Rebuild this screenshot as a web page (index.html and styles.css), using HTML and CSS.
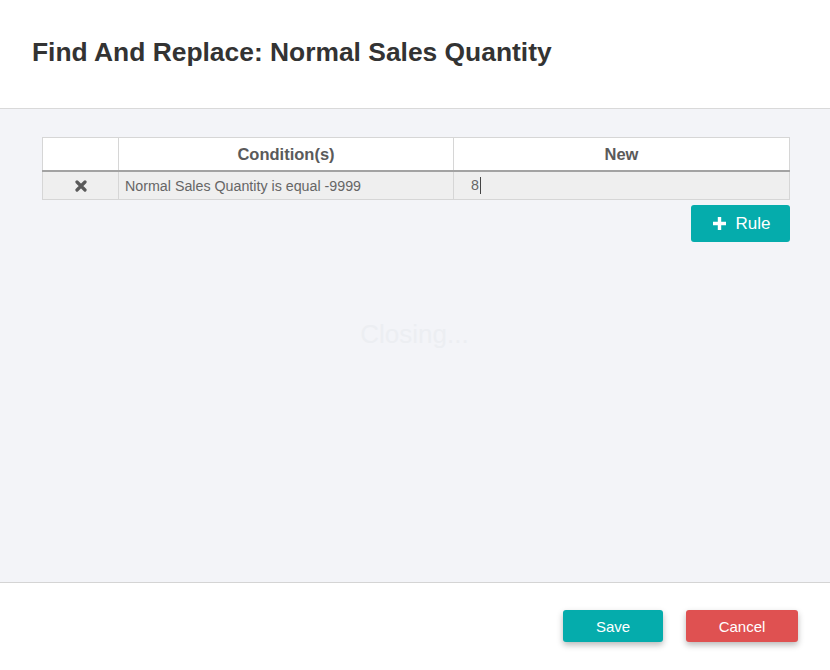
FILE: index.html
```html
<!DOCTYPE html>
<html>
<head>
<meta charset="utf-8">
<link rel="stylesheet" href="styles.css">
</head>
<body>
<div class="modal">
  <header class="modal-header">
    <h1 class="title">Find And Replace: Normal Sales Quantity</h1>
  </header>
  <main class="modal-body">
    <table class="rules">
      <thead>
        <tr>
          <th class="col-action"></th>
          <th class="col-cond">Condition(s)</th>
          <th class="col-new">New</th>
        </tr>
      </thead>
      <tbody>
        <tr>
          <td class="cell-action">
            <svg class="x-icon" width="12" height="12" viewBox="0 0 12 12"><path d="M2 2 L10 10 M10 2 L2 10" stroke="#5a5a5a" stroke-width="3.2" stroke-linecap="round"/></svg>
          </td>
          <td class="cell-cond">Normal Sales Quantity is equal -9999</td>
          <td class="cell-new">8<span class="caret"></span></td>
        </tr>
      </tbody>
    </table>
    <div class="actions">
      <button class="btn btn-rule">
        <svg class="plus" width="13" height="13" viewBox="0 0 13 13"><path d="M4.8 0 H8.2 V4.8 H13 V8.2 H8.2 V13 H4.8 V8.2 H0 V4.8 H4.8 Z" fill="#fff"/></svg>
        <span>Rule</span>
      </button>
    </div>
    <div class="closing">Closing...</div>
  </main>
  <footer class="modal-footer">
    <button class="btn btn-save">Save</button>
    <button class="btn btn-cancel">Cancel</button>
  </footer>
</div>
</body>
</html>
```
FILE: styles.css
```css
* { box-sizing: border-box; }
html, body { margin: 0; padding: 0; }
body {
  width: 830px;
  height: 670px;
  background: #fff;
  font-family: "Liberation Sans", Arial, sans-serif;
  overflow: hidden;
}
.modal { display: flex; flex-direction: column; height: 670px; }
.modal-header {
  height: 109px;
  padding: 37px 32px 0;
  border-bottom: 1px solid #d9d9d9;
  background: #fff;
}
.title {
  margin: 0;
  font-size: 26.4px;
  line-height: 30px;
  font-weight: bold;
  color: #333;
}
.modal-body {
  height: 474px;
  background: #f3f4f8;
  border-bottom: 1px solid #d4d4d4;
  padding: 28px 40px 0 42px;
  display: flex;
  flex-direction: column;
}
.rules {
  width: 748px;
  border-collapse: collapse;
  border: 1px solid #d6d6d6;
  table-layout: fixed;
}
.rules th, .rules td { box-sizing: content-box; }
.rules th {
  height: 32px;
  background: #fff;
  font-size: 16.5px;
  font-weight: bold;
  color: #5a5a5a;
  text-align: center;
  border-left: 1px solid #d6d6d6;
  border-bottom: 2px solid #a3a3a3;
  padding: 0;
}
.rules th:first-child { border-left: none; }
.col-action { width: 75px; }
.col-cond { width: 334px; }
.rules td {
  height: 27px;
  background: #efefef;
  border-left: 1px solid #d6d6d6;
  font-size: 14.25px;
  color: #666;
  padding: 0;
}
.rules td:first-child { border-left: none; }
.cell-action { text-align: center; }
.x-icon { display: inline-block; vertical-align: middle; margin-top: -2px; }
.cell-cond { padding-left: 6px !important; }
.cell-new { padding-left: 17px !important; }
.caret {
  display: inline-block;
  width: 1px;
  height: 17px;
  background: #444;
  vertical-align: middle;
  margin-left: 1px;
  margin-top: -2px;
}
.actions {
  display: flex;
  justify-content: flex-end;
  margin-top: 5px;
}
.btn {
  border: none;
  border-radius: 3px;
  color: #fff;
  font-family: "Liberation Sans", Arial, sans-serif;
  cursor: pointer;
}
.btn-rule {
  width: 99px;
  height: 37px;
  background: #05acac;
  font-size: 17px;
  display: flex;
  align-items: center;
  justify-content: center;
  gap: 10px;
  padding: 0 0 0 2px;
}
.plus { display: block; }
.closing {
  margin-top: 77px;
  text-align: center;
  font-size: 26px;
  line-height: 30px;
  color: #eceef2;
  padding-right: 3px;
}
.modal-footer {
  flex: 1;
  display: flex;
  justify-content: flex-end;
  align-items: flex-start;
  gap: 23px;
  padding: 27px 32px 0 0;
  background: #fff;
}
.btn-save, .btn-cancel {
  height: 32px;
  font-size: 15px;
  box-shadow: 0 3px 6px rgba(0, 0, 0, 0.28);
}
.btn-save { width: 100px; background: #05acac; }
.btn-cancel { width: 112px; background: #df5151; }
```
